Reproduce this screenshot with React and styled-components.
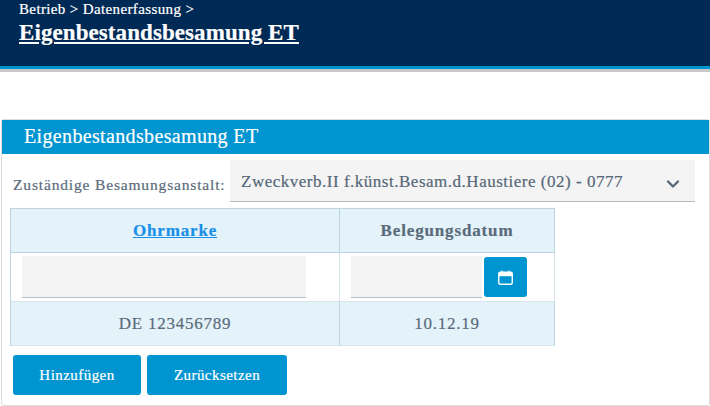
import React from 'react';
import styled, { createGlobalStyle } from 'styled-components';
import { ChevronDown } from 'lucide-react';

const GlobalStyle = createGlobalStyle`
	html, body {
		margin: 0;
		padding: 0;
		background: #ffffff;
		overflow: hidden;
	}
	* {
		box-sizing: border-box;
	}
	body {
		font-family: "Liberation Serif", "Times New Roman", serif;
		-webkit-text-stroke: 0.2px;
	}
`;

const Page = styled.div`
	width: 710px;
	height: 406px;
	display: flex;
	flex-direction: column;
`;

// Top navy bar
const Header = styled.header`
	height: 69px;
	flex-shrink: 0;
	padding-left: 19px;
	background-color: #002a56;
	border-bottom: 3px solid #0094d0;
	box-shadow: 0 3px 0 #c8c8c8;
	color: #ffffff;
`;

const Crumbs = styled.div`
	padding-top: 1px;
	font-size: 15px;
	line-height: 16px;
	letter-spacing: 0.37px;
`;

const Title = styled.h1`
	margin: 0;
	padding-top: 2px;
	font-size: 23px;
	line-height: 27px;
	font-weight: 700;
	letter-spacing: 0.08px;
	text-decoration: underline;
`;

// Panel with blue title
const Panel = styled.section`
	margin: 50px 0 0 1px;
	height: 287px;
	border: 1px solid #dcdcdc;
	border-radius: 3px;
`;

const PanelTitle = styled.div`
	height: 34px;
	padding-left: 22px;
	background-color: #0094d0;
	color: #ffffff;
	font-size: 20px;
	line-height: 33px;
	letter-spacing: 0.35px;
`;

const PanelBody = styled.div`
	padding: 6px 0 0 8px;
`;

const SelectRow = styled.div`
	display: flex;
	align-items: center;
	height: 42px;
`;

const SelectLabel = styled.label`
	width: 220px;
	padding: 8px 0 0 3px;
	color: #5a6b7b;
	font-size: 15.5px;
	letter-spacing: 0.84px;
	white-space: nowrap;
`;

const Select = styled.div`
	width: 465px;
	height: 42px;
	display: flex;
	align-items: center;
	justify-content: space-between;
	padding: 0 12px 0 11px;
	background-color: #f4f4f4;
	border-bottom: 1px solid #b4bcc4;
	color: #566878;
	font-size: 17px;
	letter-spacing: 0.51px;
	white-space: nowrap;
`;

const SelectText = styled.span`
	padding-top: 3px;
`;

const SelectArrow = styled(ChevronDown)`
	margin-top: 6px;
	color: #566878;
`;

const Table = styled.div`
	width: 545px;
	margin: 6px 0 9px 0;
	display: grid;
	grid-template-columns: 329px 215px;
	grid-template-rows: 44px 49px 44px;
	border-top: 1px solid #bcd4e2;
	border-left: 1px solid #bcd4e2;
`;

const Cell = styled.div`
	display: flex;
	align-items: ${props => (props.$form ? 'flex-start' : 'center')};
	justify-content: ${props => (props.$form ? 'flex-start' : 'center')};
	gap: 2px;
	padding: ${props => (props.$form ? '3px 0 0 11px' : '0')};
	background-color: ${props => (props.$form ? '#ffffff' : '#e4f3fa')};
	border-right: 1px solid ${props => (props.$form ? '#d6e4ec' : '#bcd4e2')};
	border-bottom: 1px solid ${props => (props.$head ? '#bcd4e2' : '#d6e4ec')};
	color: #5a6b7b;
	font-size: 17px;
	letter-spacing: ${props => (props.$head ? '0.85px' : '0.75px')};
	font-weight: ${props => (props.$head ? 700 : 400)};
`;

const SortLink = styled.a`
	color: #1a8fe8;
	text-decoration: underline;
`;

const Input = styled.div`
	width: ${props => props.$width}px;
	height: 42px;
	background-color: #f4f4f4;
	border-bottom: 1px solid #b4bcc4;
`;

const IconButton = styled.button`
	width: 43px;
	height: 40px;
	margin-top: 1px;
	padding: 0;
	display: flex;
	align-items: center;
	justify-content: center;
	border: none;
	border-radius: 3px;
	background-color: #0094d0;
	color: #ffffff;
`;

const Actions = styled.div`
	display: flex;
	gap: 6px;
	padding-left: 3px;
`;

const Button = styled.button`
	width: ${props => props.$width}px;
	height: 40px;
	padding: 0;
	border: none;
	border-radius: 3px;
	background-color: #0094d0;
	color: #ffffff;
	font-family: inherit;
	font-size: 15px;
	letter-spacing: 0.45px;
	-webkit-text-stroke: 0.2px;
`;

// Calendar glyph with a filled top band
const CalendarIcon = () => (
	<svg width="15" height="15" viewBox="0 0 15 15" fill="none">
		<rect x="0.75" y="2.25" width="13.5" height="12" rx="1.5" stroke="currentColor" strokeWidth="1.4" />
		<path d="M1 3h13v3.2H1z" fill="currentColor" />
		<path d="M4 0.5v2.5M11 0.5v2.5" stroke="currentColor" strokeWidth="1.2" />
	</svg>
);

const App = () => (
	<Page>
		<GlobalStyle />
		<Header>
			<Crumbs>Betrieb &gt; Datenerfassung &gt;</Crumbs>
			<Title>Eigenbestandsbesamung ET</Title>
		</Header>
		<Panel>
			<PanelTitle>Eigenbestandsbesamung ET</PanelTitle>
			<PanelBody>
				<SelectRow>
					<SelectLabel>Zuständige Besamungsanstalt:</SelectLabel>
					<Select>
						<SelectText>Zweckverb.II f.künst.Besam.d.Haustiere (02) - 0777</SelectText>
						<SelectArrow size={20} strokeWidth={2.8} />
					</Select>
				</SelectRow>
				<Table>
					<Cell $head>
						<SortLink href="#">Ohrmarke</SortLink>
					</Cell>
					<Cell $head>Belegungsdatum</Cell>
					<Cell $form>
						<Input $width={284} />
					</Cell>
					<Cell $form>
						<Input $width={131} />
						<IconButton aria-label="Datum wählen">
							<CalendarIcon />
						</IconButton>
					</Cell>
					<Cell>DE 123456789</Cell>
					<Cell>10.12.19</Cell>
				</Table>
				<Actions>
					<Button $width={128}>Hinzufügen</Button>
					<Button $width={140}>Zurücksetzen</Button>
				</Actions>
			</PanelBody>
		</Panel>
	</Page>
);

export default App;
